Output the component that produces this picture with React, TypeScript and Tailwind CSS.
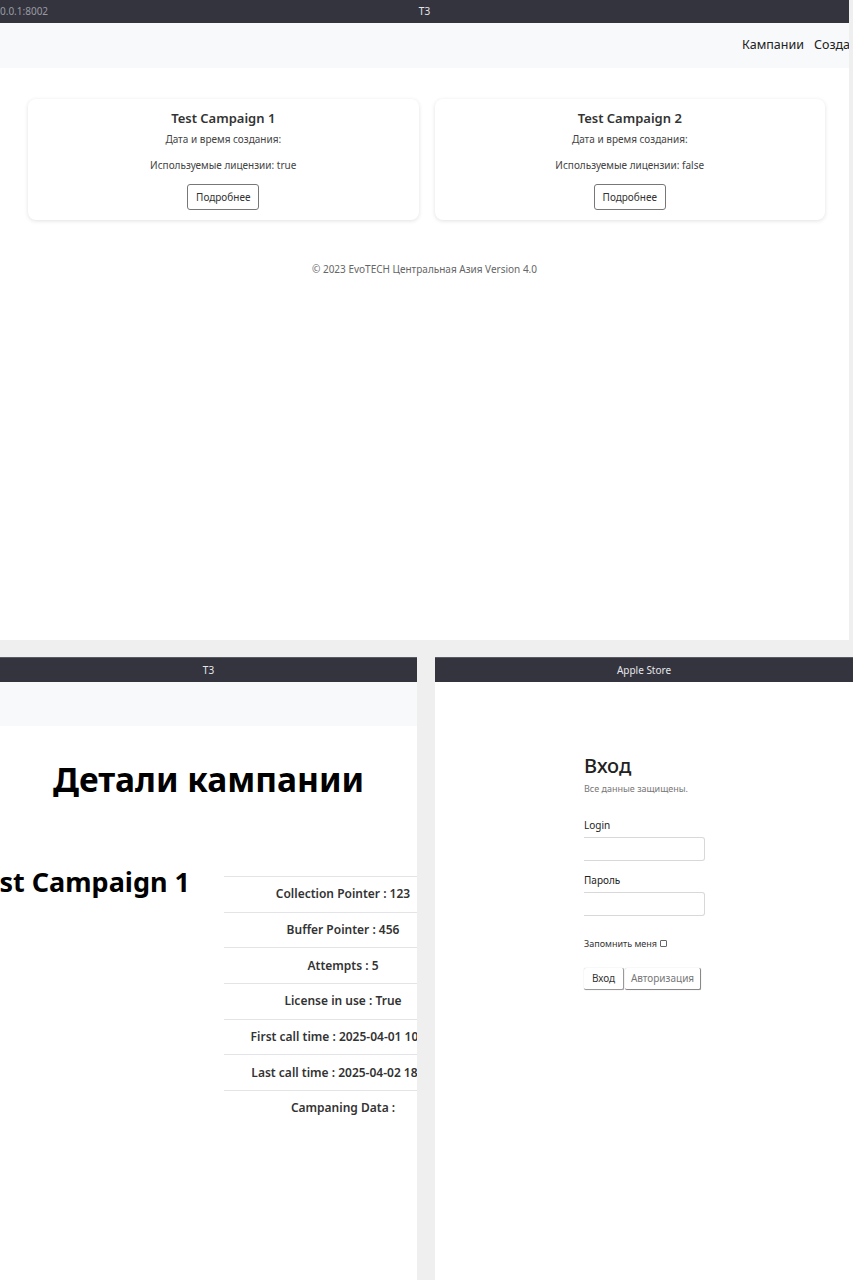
import React from 'react';

const font = { fontFamily: '"Noto Sans", "Open Sans", sans-serif' };

const TitleBar = ({ title, left }: { title: string; left?: string }) => (
  <div className="h-[25px] bg-[#34343e] border-t border-[#5a5a63] grid grid-cols-3 items-center shrink-0">
    <div className="text-[10px] text-[#9a9aa2] pl-[1px] whitespace-nowrap">{left}</div>
    <div className="text-[10px] text-[#e6e6ea] text-center whitespace-nowrap">{title}</div>
    <div />
  </div>
);

const CampaignCard = ({ name, license }: { name: string; license: string }) => (
  <div className="rounded-lg bg-white shadow-[0_1px_4px_rgba(0,0,0,0.12)] flex flex-col items-center pt-[10px] pb-[10px]">
    <div className="text-[13px] font-semibold text-[#333] leading-[18px]">{name}</div>
    <div className="text-[10px] text-[#444] mt-[5px] leading-[14px]">Дата и время создания:</div>
    <div className="text-[10px] text-[#444] mt-[12px] leading-[14px]">Используемые лицензии: {license}</div>
    <button className="mt-[12px] h-[26px] px-[8px] text-[10px] text-[#333] border border-[#777] rounded-[3px] bg-white">
      Подробнее
    </button>
  </div>
);

const details = [
  'Collection Pointer : 123',
  'Buffer Pointer : 456',
  'Attempts : 5',
  'License in use : True',
  'First call time : 2025-04-01 10:00',
  'Last call time : 2025-04-02 18:00',
  'Campaning Data :',
];

export default function App() {
  return (
    <div className="w-[853px] h-[1280px] bg-[#efefef] flex flex-col overflow-hidden" style={font}>
      {/* top window */}
      <div className="h-[640px] bg-white flex flex-col shrink-0 mr-[4px]">
        <div className="h-[23px] bg-[#34343e] grid grid-cols-3 items-center shrink-0">
          <div className="text-[10px] text-[#9a9aa2] whitespace-nowrap">0.0.1:8002</div>
          <div className="text-[10px] text-[#e6e6ea] text-center">T3</div>
          <div />
        </div>
        <div className="h-[45px] bg-[#f8f9fa] flex items-center pl-[742px] gap-[10px] whitespace-nowrap overflow-hidden text-[12.5px] text-[#222]">
          <span>Кампании</span>
          <span>Создать кампанию</span>
        </div>
        <div className="grid grid-cols-2 gap-4 px-[28px] pt-[31px] pr-[24px]">
          <CampaignCard name="Test Campaign 1" license="true" />
          <CampaignCard name="Test Campaign 2" license="false" />
        </div>
        <div className="text-center text-[10px] text-[#666] mt-[42px]">
          © 2023 EvoTECH Центральная Азия Version 4.0
        </div>
      </div>

      {/* bottom windows */}
      <div className="flex gap-[18px] mt-[17px] flex-1 min-h-0">
        <div className="w-[417px] bg-white flex flex-col overflow-hidden">
          <TitleBar title="T3" />
          <div className="h-[44px] bg-[#f8f9fa] shrink-0" />
          <h1 className="text-[33.5px] font-bold text-black text-center mt-[31px] leading-[44px]">Детали кампании</h1>
          <div className="flex mt-[75px]">
            <div className="w-[224px] shrink-0 flex justify-end pr-[34px] whitespace-nowrap">
              <h2 className="text-[27px] font-bold text-black leading-[36px] -mt-[12px]">Test Campaign 1</h2>
            </div>
            <div className="w-[238px] shrink-0">
              {details.map((d) => (
                <div
                  key={d}
                  className="h-[35.7px] border-t border-[#e2e4e8] flex items-center justify-center text-[12px] font-semibold text-[#333] whitespace-nowrap"
                >
                  {d}
                </div>
              ))}
            </div>
          </div>
        </div>

        <div className="flex-1 bg-white flex flex-col">
          <TitleBar title="Apple Store" />
          <div className="pl-[149px] pt-[71px] flex flex-col items-start">
            <div className="text-[20px] font-medium text-[#222] leading-[26px]">Вход</div>
            <div className="text-[9px] text-[#777] mt-[3px]">Все данные защищены.</div>
            <div className="text-[10px] text-[#222] mt-[22px]">Login</div>
            <input className="mt-[4px] w-[121px] h-[24px] border border-l-0 border-[#d8d8d8] rounded-r-[3px] bg-white" />
            <div className="text-[10px] text-[#222] mt-[12px]">Пароль</div>
            <input
              type="password"
              className="mt-[4px] w-[121px] h-[24px] border border-l-0 border-[#d8d8d8] rounded-r-[3px] bg-white"
            />
            <div className="text-[9px] text-[#333] mt-[21px] flex items-center gap-[3px]">
              Запомнить меня
              <span className="inline-block w-[7px] h-[7px] border border-[#666] rounded-[1px]" />
            </div>
            <div className="flex mt-[18px]">
              <button className="h-[22px] w-[40px] text-[10px] text-[#333] bg-white border-b border-r border-[#999] rounded-[2px] shadow-[0_0_1px_rgba(0,0,0,0.3)]">
                Вход
              </button>
              <button className="ml-[1px] h-[22px] w-[76px] text-[10px] text-[#777] bg-white border-b border-r border-[#888] rounded-[2px] shadow-[0_0_1px_rgba(0,0,0,0.3)]">
                Авторизация
              </button>
            </div>
          </div>
        </div>
      </div>
    </div>
  );
}
